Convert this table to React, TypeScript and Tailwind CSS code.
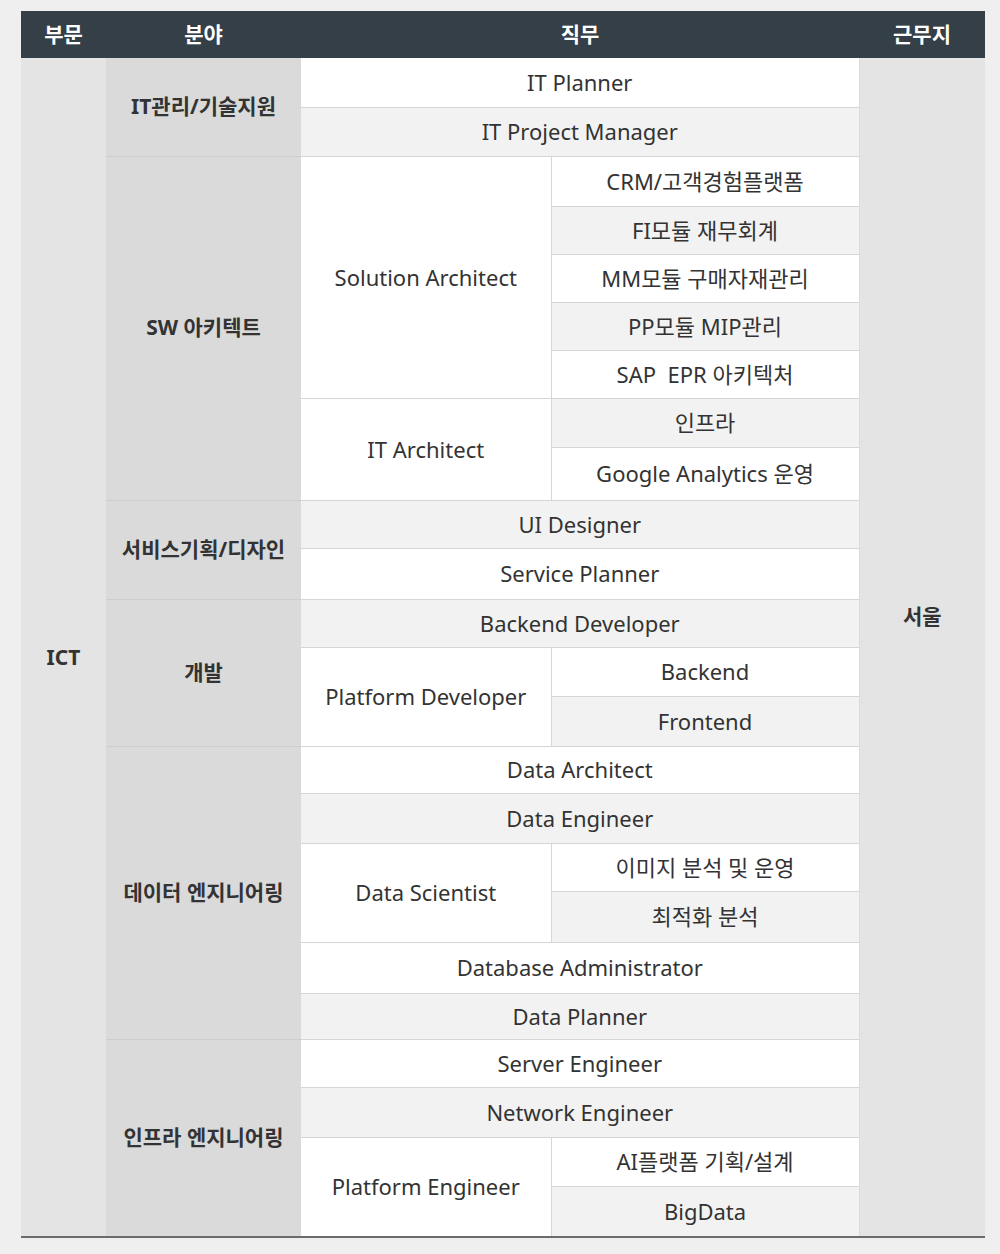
import React from 'react'

const font = { fontFamily: '"Noto Sans", "Noto Sans CJK KR", sans-serif' }

// 한 줄 = 직무 칸(하나 또는 둘), 분야/부문/근무지는 rowSpan으로 처리
function JobCell({ text, gray, colSpan, rowSpan, left }: { text: string; gray?: boolean; colSpan?: number; rowSpan?: number; left?: boolean }) {
  return (
    <td
      colSpan={colSpan}
      rowSpan={rowSpan}
      className={
        'text-center text-[22px] text-[#333] border-b border-[#d6d6d6] whitespace-pre ' +
        (gray ? 'bg-[#f2f2f2] ' : 'bg-white ') +
        (left ? 'border-r border-r-[#d6d6d6] ' : '')
      }
    >
      {text}
    </td>
  )
}

function FieldCell({ text, rowSpan }: { text: string; rowSpan: number }) {
  return (
    <td rowSpan={rowSpan} className="bg-[#dadada] text-center text-[21px] font-bold text-[#333] border-b border-[#cdcdcd]">
      {text}
    </td>
  )
}

export default function App() {
  const rowCls = 'h-[49px]'
  return (
    <div className="min-h-[1254px] bg-[#efefef] pt-[11px] pl-[21px]" style={font}>
      <table className="w-[964px] border-collapse table-fixed border-b-2 border-b-[#6b6b6b]">
        <colgroup>
          <col className="w-[85px]" />
          <col className="w-[195px]" />
          <col className="w-[250px]" />
          <col className="w-[308px]" />
          <col className="w-[126px]" />
        </colgroup>
        <thead>
          <tr className="h-[47px] bg-[#343f47] text-white text-[21px] font-bold">
            <th>부문</th>
            <th>분야</th>
            <th colSpan={2}>직무</th>
            <th>근무지</th>
          </tr>
        </thead>
        <tbody>
          <tr className={rowCls}>
            <td rowSpan={24} className="bg-[#e4e4e4] pt-[22px] text-center text-[21px] font-bold text-[#333]">ICT</td>
            <FieldCell text="IT관리/기술지원" rowSpan={2} />
            <JobCell text="IT Planner" colSpan={2} />
            <td rowSpan={24} className="bg-[#e4e4e4] pb-[60px] text-center text-[21px] font-bold text-[#333] border-l border-[#dcdcdc]">서울</td>
          </tr>
          <tr className={rowCls}>
            <JobCell text="IT Project Manager" colSpan={2} gray />
          </tr>

          <tr className="h-[50px]">
            <FieldCell text="SW 아키텍트" rowSpan={7} />
            <JobCell text="Solution Architect" rowSpan={5} left />
            <JobCell text="CRM/고객경험플랫폼" />
          </tr>
          <tr className="h-[48px]"><JobCell text="FI모듈 재무회계" gray /></tr>
          <tr className="h-[48px]"><JobCell text="MM모듈 구매자재관리" /></tr>
          <tr className="h-[48px]"><JobCell text="PP모듈 MIP관리" gray /></tr>
          <tr className="h-[48px]"><JobCell text="SAP  EPR 아키텍처" /></tr>
          <tr className={rowCls}>
            <JobCell text="IT Architect" rowSpan={2} left />
            <JobCell text="인프라" gray />
          </tr>
          <tr className="h-[53px]"><JobCell text="Google Analytics 운영" /></tr>

          <tr className="h-[48px]">
            <FieldCell text="서비스기획/디자인" rowSpan={2} />
            <JobCell text="UI Designer" colSpan={2} gray />
          </tr>
          <tr className="h-[51px]"><JobCell text="Service Planner" colSpan={2} /></tr>

          <tr className="h-[48px]">
            <FieldCell text="개발" rowSpan={3} />
            <JobCell text="Backend Developer" colSpan={2} gray />
          </tr>
          <tr className="h-[49px]">
            <JobCell text="Platform Developer" rowSpan={2} left />
            <JobCell text="Backend" />
          </tr>
          <tr className="h-[50px]"><JobCell text="Frontend" gray /></tr>

          <tr className="h-[47px]">
            <FieldCell text="데이터 엔지니어링" rowSpan={6} />
            <JobCell text="Data Architect" colSpan={2} />
          </tr>
          <tr className="h-[50px]"><JobCell text="Data Engineer" colSpan={2} gray /></tr>
          <tr className="h-[48px]">
            <JobCell text="Data Scientist" rowSpan={2} left />
            <JobCell text="이미지 분석 및 운영" />
          </tr>
          <tr className="h-[51px]"><JobCell text="최적화 분석" gray /></tr>
          <tr className="h-[51px]"><JobCell text="Database Administrator" colSpan={2} /></tr>
          <tr className="h-[46px]"><JobCell text="Data Planner" colSpan={2} gray /></tr>

          <tr className="h-[48px]">
            <FieldCell text="인프라 엔지니어링" rowSpan={5} />
            <JobCell text="Server Engineer" colSpan={2} />
          </tr>
          <tr className="h-[50px]"><JobCell text="Network Engineer" colSpan={2} gray /></tr>
          <tr className={rowCls}>
            <JobCell text="Platform Engineer" rowSpan={2} left />
            <JobCell text="AI플랫폼 기획/설계" />
          </tr>
          <tr className="h-[51px]"><JobCell text="BigData" gray /></tr>
        </tbody>
      </table>
    </div>
  )
}
